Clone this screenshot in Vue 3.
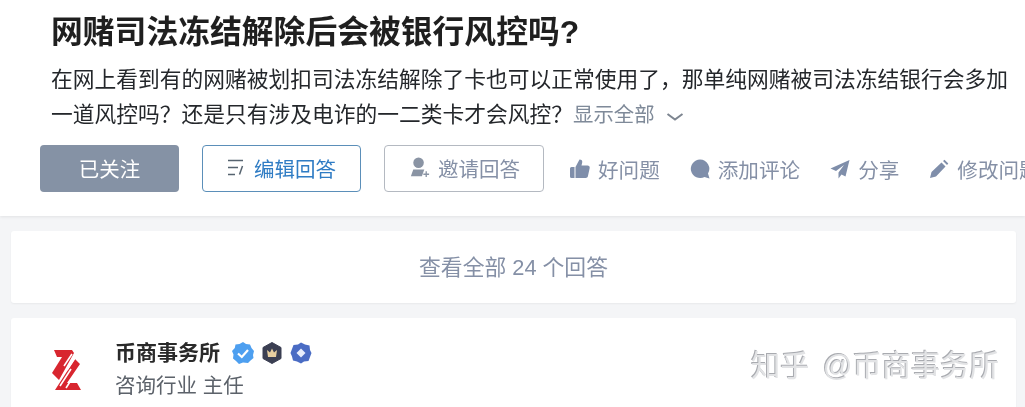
<template>
  <div class="pagina">
    <header class="cabecera">
      <h1 class="titulo">网赌司法冻结解除后会被银行风控吗?</h1>
      <p class="detalle">
        在网上看到有的网赌被划扣司法冻结解除了卡也可以正常使用了，那单纯网赌被司法冻结银行会多加一道风控吗？还是只有涉及电诈的一二类卡才会风控？<span class="mostrar">显示全部</span>
        <svg class="flecha" viewBox="0 0 18 10" width="18" height="10"><path d="M1.500 2 L9 7.500 L16.500 2" fill="none" stroke="#7d8590" stroke-width="2" /></svg>
      </p>
      <div class="acciones">
        <button class="boton seguido">已关注</button>
        <button class="boton editar">
          <svg viewBox="0 0 18 20" width="18" height="20">
            <path d="M1 2.500h15M1 9.500h10M1 16.500h7" stroke="#56636f" stroke-width="1.500" fill="none" />
            <path d="M15.500 8l-3 8.500" stroke="#56636f" stroke-width="1.500" fill="none" />
          </svg>
          编辑回答
        </button>
        <button class="boton invitar">
          <svg viewBox="0 0 24 24" width="23" height="23">
            <circle cx="11" cy="7" r="5.500" fill="#8a94a4" />
            <path d="M3 21 L5.500 14 H17 L14.500 21 Z" fill="#8a94a4" />
            <path d="M19 16v6M16 19h6" stroke="#8a94a4" stroke-width="1.400" />
          </svg>
          邀请回答
        </button>
        <div class="enlaces">
          <span class="enlace">
            <svg viewBox="0 0 20 20" width="20" height="20">
              <path d="M0 9.500 Q0 8 1.500 8 H4.500 V19 H1.500 Q0 19 0 17.500 Z M5.500 8 L9.500 .5 c2 0 3.200 1.300 2.700 3 L11.500 6.500 h6 c1.500 0 2.500 1 2.200 2.500 l-1.800 8.300 c-.3 1.200-1 1.700-2.200 1.700 H5.500 Z" fill="#7f8eaa" />
            </svg>
            好问题
          </span>
          <span class="enlace">
            <svg viewBox="0 0 20 20" width="20" height="20">
              <path d="M10 .5 a9.300 9.300 0 1 0 4.500 17.500 L19.500 19.500 L18 14.500 A9.300 9.300 0 0 0 10 .5 Z" fill="#7f8eaa" />
            </svg>
            添加评论
          </span>
          <span class="enlace">
            <svg viewBox="0 0 20 20" width="20" height="20">
              <path d="M19.500 1 L0.500 9.500 L6 12 L14 6 L8.500 13.500 L8.500 19.500 L11.500 15.500 L15.500 17.500 Z" fill="#7f8eaa" />
            </svg>
            分享
          </span>
          <span class="enlace">
            <svg viewBox="0 0 20 20" width="20" height="20">
              <path d="M1 19 L2.500 13 L12.500 3.500 L16.500 7.500 L7 17.500 Z M14 2 L15.500 .8 L19.300 4.500 L18 6 Z" fill="#7f8eaa" />
            </svg>
            修改问题
          </span>
        </div>
      </div>
    </header>

    <div class="tarjeta ver-todo">查看全部 {{ total }} 个回答</div>

    <section class="tarjeta autor">
      <svg class="logo" viewBox="0 0 30 40" width="30" height="40">
        <path d="M3 0 H21 L23 3 L8 30 L1 23 L11 7 H6 Z" fill="#d8262f" />
        <path d="M24 9 L29 14 L16 33 H26 L30 40 H4 Z" fill="#d8262f" />
        <path d="M13 16l8-12M16 20l8-12M9 36l11-17M15 38l11-17" stroke="#fff" stroke-width="1.600" />
      </svg>
      <div class="datos">
        <div class="nombre">
          币商事务所
          <span class="insignias">
            <svg viewBox="0 0 22 22" width="22" height="22">
              <path d="M11 0 L14 2 L18 2.500 L19.500 6 L22 9 L21 13 L21.500 16 L18.500 18.500 L16 21 L11 20.500 L7 22 L4 19 L1 16.500 L1.500 12.500 L0 9 L2.800 6 L3.500 2.500 L7.500 2 Z" fill="#4d9ff0" />
              <path d="M6 11.500 L9.800 15 L16 8" stroke="#fff" stroke-width="2.200" fill="none" />
            </svg>
            <svg viewBox="0 0 22 22" width="22" height="22">
              <path d="M11 .5 L20 5.500 V16.500 L11 21.500 L2 16.500 V5.500 Z" fill="#3b3f52" stroke="#3b3f52" stroke-linejoin="round" stroke-width="1" />
              <path d="M6 8 L9 10.500 L11 6.500 L13 10.500 L16 8 L15 15 H7 Z" fill="#e8cfa0" />
            </svg>
            <svg viewBox="0 0 22 22" width="22" height="22">
              <path d="M11 .5 L15 2.500 L19.500 3.500 L20 8 L21.500 11 L20 15 L18.500 19 L14 19.500 L11 21.500 L7 19.500 L3 18.500 L2 14.500 L.5 11 L2 7 L3.500 3 L8 2.500 Z" fill="#4a6cc4" />
              <path d="M11 6.500 L15.500 11 L11 15.500 L6.500 11 Z" fill="#e8eefc" />
            </svg>
          </span>
        </div>
        <div class="cargo">咨询行业 主任</div>
      </div>
    </section>

    <div class="marca">知乎 @币商事务所</div>
  </div>
</template>

<script setup>
  const total = 24
</script>

<style>
  html, body {
    margin: 0;
    background: #f4f5f7;
  }
</style>

<style scoped>
  .pagina {
    width: 1025px;
    height: 407px;
    overflow: hidden;
    position: relative;
    font-family: "Liberation Sans", "Noto Sans CJK SC", sans-serif;
    background: #f4f5f7;
    filter: blur(0.4px);
  }

  .cabecera {
    height: 216px;
    box-sizing: border-box;
    padding: 12px 0 0 40px;
    background: #fff;
    box-shadow: 0 1px 3px rgba(18, 18, 18, 0.08);
  }

  .titulo {
    margin: 0 0 0 11px;
    font-size: 31.800px;
    line-height: 40px;
    font-weight: 700;
    color: #1f1f1f;
    white-space: nowrap;
  }

  .detalle {
    width: 970px;
    margin: 10px 0 0 11px;
    font-size: 21.750px;
    line-height: 35px;
    color: #24272b;
  }

  .mostrar {
    color: #7f8a99;
    font-size: 20.400px;
  }

  .flecha {
    margin-left: 11px;
  }

  .acciones {
    display: flex;
    align-items: center;
    margin-top: 12px;
    white-space: nowrap;
  }

  .boton {
    display: flex;
    flex-shrink: 0;
    align-items: center;
    justify-content: center;
    gap: 7px;
    box-sizing: border-box;
    width: 160px;
    height: 47px;
    margin-right: 23px;
    padding: 0 0 2px;
    border-radius: 4px;
    font-family: inherit;
    font-size: 20.500px;
    background: #fff;
  }

  .seguido {
    width: 139px;
    border: 0;
    background: #8592a5;
    color: #fff;
  }

  .editar {
    width: 159px;
    gap: 9px;
    border: 1px solid #5b8fb9;
    color: #2f7cc4;
  }

  .invitar {
    border: 1px solid #b4b9c1;
    color: #8590a6;
    margin-right: 26px;
  }

  .enlaces {
    display: flex;
    flex-shrink: 0;
    gap: 30px;
  }

  .enlace {
    display: flex;
    align-items: center;
    gap: 8px;
    font-size: 20.600px;
    color: #8590a6;
  }

  .tarjeta {
    margin: 15px 9px 0 11px;
    background: #fff;
    border-radius: 3px;
    box-shadow: 0 1px 2px rgba(18, 18, 18, 0.05);
  }

  .ver-todo {
    height: 69px;
    padding-bottom: 3px;
    display: flex;
    align-items: center;
    justify-content: center;
    font-size: 21.800px;
    color: #8590a6;
  }

  .autor {
    height: 100px;
    display: flex;
    gap: 34px;
    padding: 17px 0 0 40px;
  }

  .logo {
    margin-top: 15px;
  }

  .datos {
    display: flex;
    flex-direction: column;
  }

  .nombre {
    display: flex;
    align-items: center;
    font-size: 21px;
    line-height: 36px;
    font-weight: 700;
    color: #2a2a2a;
  }

  .insignias {
    display: flex;
    gap: 7px;
    margin-left: 12px;
  }

  .cargo {
    font-size: 20.500px;
    line-height: 30px;
    color: #5c626a;
  }

  .marca {
    position: absolute;
    left: 751px;
    top: 348px;
    font-size: 29.300px;
    line-height: 36px;
    word-spacing: 5px;
    white-space: nowrap;
    color: #e2e3e5;
    text-shadow: -1px -1px 0 #a9abb0;
  }
</style>
